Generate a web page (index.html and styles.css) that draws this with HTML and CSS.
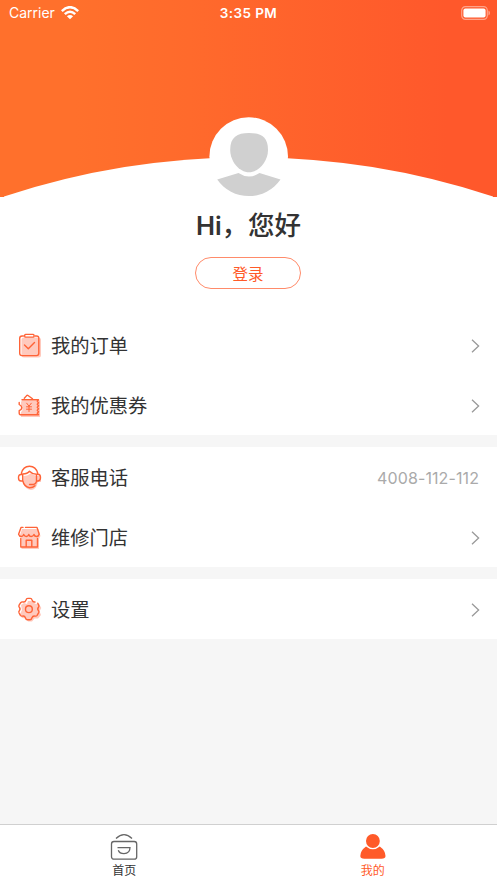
FILE: index.html
```html
<!DOCTYPE html>
<html lang="zh-CN">
<head>
<meta charset="utf-8">
<title>我的</title>
<link rel="stylesheet" href="styles.css">
</head>
<body>
<div class="app">
  <header class="hero">
    <svg class="hero-curve" viewBox="0 0 497 41" preserveAspectRatio="none"><path fill="#fff" d="M4 40.5A779 779 0 0 1 493 40.5V41H4z"/></svg>
    <div class="status">
      <div class="carrier"><span>Carrier</span>
        <svg width="18" height="14" viewBox="0 0 18 14" fill="none" stroke="#fff" stroke-width="2.5"><path d="M.8 5.100Q9-2.700 17.200 5.100M3.800 8.200Q9 3.400 14.200 8.200"/><path fill="#fff" stroke="none" d="M9 13.200 5.900 10.200Q9 7.700 12.100 10.200z"/></svg>
      </div>
      <div class="time">3:35 PM</div>
      <svg class="battery" width="30" height="14" viewBox="0 0 30 14"><rect x="1.700" y=".7" width="25.600" height="12.600" rx="3.700" fill="none" stroke="#fff" stroke-opacity=".45" stroke-width="1.200"/><rect x="3.400" y="2.400" width="22.200" height="9.200" rx="2" fill="#fff"/><path d="M28.500 4.600Q29.900 5.400 29.900 7T28.500 9.400z" fill="#fff" fill-opacity=".5"/></svg>
    </div>
    <svg class="avatar" width="80" height="82" viewBox="0 0 80 82"><circle cx="39.700" cy="39.500" r="39.300" fill="#fff"/><path fill="#d0d0d0" d="M40 16C52 16 59 20 59 33C59 44 50 55.300 40 55.300S21.200 44 21.200 33C21.200 20 28 16 40 16z"/><path fill="#d0d0d0" d="M8.200 62.500 29.500 56Q40 63 50.500 56L71.500 62.500A38.500 38.500 0 0 1 8.200 62.500z"/></svg>
  </header>
  <section class="profile">
    <h1><span class="hi">Hi</span>，您好</h1>
    <button class="login">登录</button>
  </section>
  <section class="group">
    <div class="row">
      <svg class="icon" viewBox="0 0 24 24"><rect x="3.500" y="3.500" width="19.500" height="20" rx="2.500" class="tint"/><path d="M5.500 2H4Q1.700 2 1.700 4.300V19.300Q1.700 21.600 4 21.600H18.500Q20.800 21.600 20.800 19.300V4.300Q20.800 2 18.500 2H17"/><rect x="6.700" y=".4" width="9.300" height="2.700" rx=".8" fill="#fff"/><path d="m6.500 11 3.800 3.700L16.500 8.500"/></svg>
      <span class="label">我的订单</span>
      <svg class="chevron" viewBox="0 0 9 14"><path d="m1 .8 6.600 6.200L1 13.200"/></svg>
    </div>
    <div class="row">
      <svg class="icon" viewBox="0 0 24 24"><path class="tint" d="M4 6.500H22V23H3V18Q6 16 3 13V8z"/><path d="m6.300 4.200 2.400-2.600Q9.300 1 10 1.500L14.500 4.800M4 5.700H20.500L19.300 7.200 20.500 8.700 19.300 10.200 20.500 11.700 19.300 13.200 20.500 14.700 19.300 16.200 20.500 17.700 19.300 19.200 20.500 20.700H3.200Q1.200 20.700 1.200 19.200V16.700Q3.800 15.500 3.800 13.700T1.200 10.500V8.500"/><path stroke-width="1" d="M8.700 9.200l2.300 3 2.300-3M11 12.200V17.500M8.500 12.800h5M8.500 15.200h5"/></svg>
      <span class="label">我的优惠券</span>
      <svg class="chevron" viewBox="0 0 9 14"><path d="m1 .8 6.600 6.200L1 13.200"/></svg>
    </div>
  </section>
  <section class="group">
    <div class="row">
      <svg class="icon" viewBox="0 0 24 24"><path class="tint" d="M5.500 10Q10 10 13 7Q16 10 21 10H23V16H20Q18 24 13 24Q7 23 5 17z"/><path d="M3.300 7.500Q5 .2 11.500 .2T19.800 7.500M4.700 8Q9.500 7.800 11.500 5.200Q14 8 18.500 8.300V15.500Q18 18 15.500 18.500H11.500M4.700 8V14.500Q6 20.500 11.500 21.800Q15 21.800 17 19.800M4.700 8.500H3Q.5 8.500.5 11.700T3 15H4.700M18.500 8.300H20Q22.500 8.300 22.500 11.500T20 15H18.500"/></svg>
      <span class="label">客服电话</span>
      <span class="phone">4008-112-112</span>
    </div>
    <div class="row">
      <svg class="icon" viewBox="0 0 24 24"><path class="tint" d="M4 3H20.500L22.500 10 21 13V23H3.500V12L2 9z"/><path d="M7.500 1.400H19L21.200 8.200Q20.500 10.500 18.500 10.500T16 8.500Q15 10.500 13.200 10.500T10.800 8.500Q10 10.500 8.300 10.500T5.700 8.500Q5 10.500 3.200 10.500T.6 8.200L3 1.400H5M2.800 12.500V21H19.500V12.500M8.200 21V14.200H13.800V21"/></svg>
      <span class="label">维修门店</span>
      <svg class="chevron" viewBox="0 0 9 14"><path d="m1 .8 6.600 6.200L1 13.200"/></svg>
    </div>
  </section>
  <section class="group">
    <div class="row">
      <svg class="icon" viewBox="0 0 24 24"><path class="tint" d="M10 3H15L17 5.800H21L23.300 10 21.500 13.200 23 17 20 20.500H16.500L14 23.500H10L8 20.500 4 20 2 16 4 12 3 7 6 5 9 6z"/><path d="M19.800 5.200 20.700 7.200Q21.300 8.300 20.500 9.200Q19 11 20.500 12.700Q21.300 13.600 20.700 14.700L19.100 17.300Q18.300 18.400 16.800 18.100Q14.800 17.700 13.800 20Q13.400 21.800 12 21.800H9.300Q8 21.800 7.500 20Q6.700 17.700 4.600 18.100Q3.200 18.400 2.400 17.300L1.100 15Q.5 13.700 1.300 12.800Q2.800 11 1.300 9.300Q.5 8.300 1.100 7.200L2.700 4.700Q3.600 3.600 5 4Q7.200 4.500 8 2Q8.400.4 9.800.4H12.300Q13.600.4 14.100 2Q14.900 4.300 17 4"/><circle cx="10.900" cy="11.200" r="3.400"/></svg>
      <span class="label">设置</span>
      <svg class="chevron" viewBox="0 0 9 14"><path d="m1 .8 6.600 6.200L1 13.200"/></svg>
    </div>
  </section>
  <nav class="tabs">
    <div class="tab">
      <svg width="28" height="28" viewBox="0 0 28 28" fill="none" stroke="#666" stroke-width="1.300"><path d="M6 5.500Q14-2.300 22 5.500"/><rect x="1.500" y="8.500" width="25.200" height="17.700" rx="2.500"/><path d="M7.500 14.600H20Q20 20.600 14 20.600 9.500 20.600 8.300 17.200"/></svg>
      <span>首页</span>
    </div>
    <div class="tab active">
      <svg width="28" height="28" viewBox="0 0 28 28" fill="#ff5a29"><circle cx="13.900" cy="8" r="6.900"/><path d="M7 13.400Q13.900 19 20.800 13.400Q26.500 17.500 26.500 23Q26.500 25.800 22.500 25.800H5.300Q1.300 25.800 1.300 23Q1.300 17.500 7 13.400z"/></svg>
      <span>我的</span>
    </div>
  </nav>
</div>
</body>
</html>
```
FILE: styles.css
```css
* { box-sizing: border-box; }
body { margin: 0; font-family: Inter, "Noto Sans CJK SC", sans-serif; color: #333; }
.app { height: 883px; display: flex; flex-direction: column; background: #f6f6f6; overflow: hidden; }
.hero { position: relative; flex: none; height: 197px; background: linear-gradient(90deg, #ff702c 15%, #ff6a2c 38%, #ff582b 90%); }
.hero-curve { position: absolute; left: 0; bottom: 0; width: 100%; height: 41px; }
.avatar { position: absolute; left: 209px; top: 117px; }
.status { display: grid; grid-template-columns: 1fr auto 1fr; align-items: center; height: 25px; padding: 0 7px 0 9px; color: #fff; font-size: 14px; }
.carrier { display: flex; align-items: center; gap: 6px; letter-spacing: 0; }
.time { font-weight: 600; font-size: 13.500px; letter-spacing: .4px; margin-right: 2px; }
.battery { justify-self: end; }
.profile { flex: none; height: 118px; background: #fff; display: flex; flex-direction: column; align-items: center; }
h1 { margin: 8px 0 0; height: 38px; line-height: 38px; font: 500 26.500px/38px "Noto Sans CJK SC", sans-serif; }
.hi { font-family: Inter, sans-serif; font-weight: 600; font-size: 25.500px; }
.login { margin: 14px 1px 0 0; width: 106px; height: 32px; padding: 0; border: 1px solid #ff8b6a; border-radius: 16px; background: #fff; color: #ff5a29; font: 15.500px/29px "Noto Sans CJK SC", sans-serif; }
.group { flex: none; background: #fff; margin-bottom: 12px; }
.row { display: flex; align-items: center; height: 60px; padding: 0 17px 0 18px; }
.icon { width: 24px; height: 24px; margin-top: 1px; fill: none; stroke: #ff6337; stroke-width: 1.400; stroke-linecap: round; stroke-linejoin: round; overflow: visible; }
.tint { fill: #ffc9bd; stroke: none; }
.label { margin: 2px 0 0 9px; font-size: 19.300px; line-height: 30px; }
.chevron { width: 9px; height: 14px; margin: 1px 0 0 auto; fill: none; stroke: #999; stroke-width: 1.300; }
.phone { margin: 1px 1px 0 auto; font-size: 16px; letter-spacing: .1px; color: #aaa; }
.tabs { flex: none; margin-top: auto; height: 59px; display: grid; grid-template-columns: 1fr 1fr; background: #fff; border-top: 1px solid #d0d0d0; }
.tab { display: flex; flex-direction: column; align-items: center; padding-top: 8px; font-size: 12px; line-height: 20px; }
.active { color: #ff5a29; }
```
